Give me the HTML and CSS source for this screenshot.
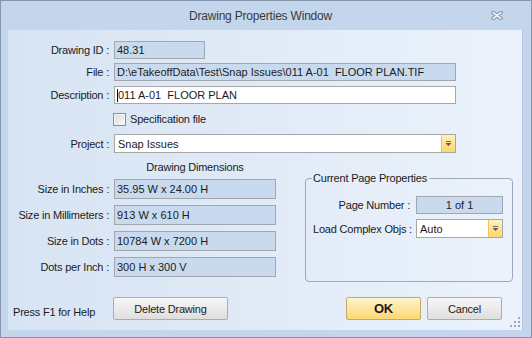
FILE: index.html
```html
<!DOCTYPE html>
<html lang="en">
<head>
    <meta charset="UTF-8">
    <title>Drawing Properties Window</title>
    <link rel="stylesheet" href="styles.css">
</head>
<body>
    <div class="window">
        <div class="titlebar">
            <span class="title">Drawing Properties Window</span>
            <svg class="close" width="12" height="9" viewBox="0 0 12 9">
                <path d="M2 1.5 L10 7.5 M10 1.5 L2 7.5" stroke="#7f90a8" stroke-width="3.6" stroke-linecap="round"/>
                <path d="M2 1.5 L10 7.5 M10 1.5 L2 7.5" stroke="#eef3f9" stroke-width="1.6" stroke-linecap="round"/>
            </svg>
        </div>

        <div class="client">
            <div class="row row-id">
                <label class="lbl">Drawing ID :</label>
                <div class="field readonly w-id">48.31</div>
            </div>
            <div class="row row-file">
                <label class="lbl">File :</label>
                <div class="field readonly w-full">D:\eTakeoffData\Test\Snap Issues\011 A-01&nbsp; FLOOR PLAN.TIF</div>
            </div>
            <div class="row row-desc">
                <label class="lbl">Description :</label>
                <div class="field edit w-full"><span class="caret"></span>011 A-01&nbsp; FLOOR PLAN</div>
            </div>
            <div class="row row-check">
                <span class="checkbox"></span>
                <span>Specification file</span>
            </div>
            <div class="row row-project">
                <label class="lbl">Project :</label>
                <div class="combo w-full">
                    <span class="combo-text">Snap Issues</span>
                    <span class="drop">
                        <svg width="7" height="5" viewBox="0 0 7 5"><rect x="1" y="0" width="5" height="1" fill="#6b6b6b"/><path d="M0.5 2 H6.5 L3.5 5 Z" fill="#5a5a5a"/></svg>
                    </span>
                </div>
            </div>

            <div class="middle">
                <div class="dims">
                    <div class="dims-title">Drawing Dimensions</div>
                    <div class="row dim-row">
                        <label class="lbl">Size in Inches :</label>
                        <div class="field readonly w-dim">35.95 W x 24.00 H</div>
                    </div>
                    <div class="row dim-row">
                        <label class="lbl">Size in Millimeters :</label>
                        <div class="field readonly w-dim">913 W x 610 H</div>
                    </div>
                    <div class="row dim-row">
                        <label class="lbl">Size in Dots :</label>
                        <div class="field readonly w-dim">10784 W x 7200 H</div>
                    </div>
                    <div class="row dim-row">
                        <label class="lbl">Dots per Inch :</label>
                        <div class="field readonly w-dim">300 H x 300 V</div>
                    </div>
                </div>

                <fieldset class="group">
                    <legend>Current Page Properties</legend>
                    <div class="row grp-row">
                        <label class="lbl grp-lbl">Page Number :</label>
                        <div class="field readonly w-grp center">1 of 1</div>
                    </div>
                    <div class="row grp-row">
                        <label class="lbl grp-lbl">Load Complex Objs :</label>
                        <div class="combo w-grp">
                            <span class="combo-text">Auto</span>
                            <span class="drop">
                                <svg width="7" height="5" viewBox="0 0 7 5"><rect x="1" y="0" width="5" height="1" fill="#6b6b6b"/><path d="M0.5 2 H6.5 L3.5 5 Z" fill="#5a5a5a"/></svg>
                            </span>
                        </div>
                    </div>
                </fieldset>
            </div>

            <div class="footer">
                <span class="help">Press F1 for Help</span>
                <button class="btn">Delete Drawing</button>
                <span class="spacer"></span>
                <button class="btn btn-ok">OK</button>
                <button class="btn btn-cancel">Cancel</button>
            </div>

            <svg class="grip" width="10" height="10" viewBox="0 0 10 10">
                <rect x="8" y="0" width="2" height="2" fill="#9aa9bd"/>
                <rect x="4" y="4" width="2" height="2" fill="#9aa9bd"/>
                <rect x="8" y="4" width="2" height="2" fill="#9aa9bd"/>
                <rect x="0" y="8" width="2" height="2" fill="#9aa9bd"/>
                <rect x="4" y="8" width="2" height="2" fill="#9aa9bd"/>
                <rect x="8" y="8" width="2" height="2" fill="#9aa9bd"/>
            </svg>
        </div>
    </div>
</body>
</html>
```

FILE: styles.css
```css
* {
    margin: 0;
    padding: 0;
    box-sizing: border-box;
}

body {
    font-family: "Liberation Sans", Arial, sans-serif;
    font-size: 11px;
    letter-spacing: -0.2px;
    color: #1b1b1b;
    background: #c5d7ed;
}

.window {
    width: 532px;
    height: 338px;
    border: 1px solid #8596ae;
    background: #c4d6ec;
    display: flex;
    flex-direction: column;
    padding: 0 8px 7px 7px;
}

.titlebar {
    height: 29px;
    display: flex;
    align-items: center;
    justify-content: center;
    position: relative;
}

.title {
    font-size: 12px;
    color: #3a3a3a;
    margin-left: -10px;
}

.close {
    position: absolute;
    right: 20px;
    top: 10px;
}

.client {
    flex: 1;
    position: relative;
    background: linear-gradient(to right, #d7e4f3 0%, #e3ecf8 60%, #ebf2fb 100%);
    border-right: 1px solid #b8c9df;
    display: flex;
    flex-direction: column;
    padding: 11px 0 10px 0;
}

.row {
    display: flex;
    align-items: center;
}

.lbl {
    width: 101px;
    text-align: right;
    margin-right: 5px;
    white-space: nowrap;
}

.field {
    height: 18px;
    border: 1px solid #a3a7ad;
    padding: 0 2px;
    display: flex;
    align-items: center;
    white-space: nowrap;
    overflow: hidden;
    letter-spacing: 0;
}

.readonly {
    background: #c9daef;
}

.edit {
    background: #fff;
    border-color: #a7a7a7;
    padding-left: 2px;
}

.caret {
    width: 1px;
    height: 13px;
    background: #000;
}

.center {
    justify-content: center;
}

.w-id {
    width: 91px;
}

.w-full {
    width: 342px;
}

.w-dim {
    width: 162px;
    height: 20px;
}

.w-grp {
    width: 87px;
}

.row-file {
    margin-top: 4px;
}

.row-desc {
    margin-top: 5px;
}

.row-check {
    margin-top: 8px;
    padding-left: 105px;
    height: 14px;
}

.checkbox {
    width: 13px;
    height: 13px;
    border: 1px solid #8e8f8f;
    background: linear-gradient(135deg, #dcdcdc, #f8f8f8);
    box-shadow: inset 0 0 0 1px #f4f4f4;
    margin-right: 4px;
}

.row-project {
    margin-top: 8px;
}

.combo {
    height: 19px;
    background: #fff;
    border: 1px solid #a7a7a7;
    display: flex;
    align-items: stretch;
    letter-spacing: 0;
}

.combo-text {
    flex: 1;
    padding-left: 3px;
    display: flex;
    align-items: center;
}

.drop {
    width: 14px;
    border-left: 1px solid #f1c35a;
    background: linear-gradient(to bottom, #fff2c4, #fde189 55%, #fbd873);
    display: flex;
    align-items: center;
    justify-content: center;
}

.middle {
    display: flex;
    margin-top: 6px;
}

.dims {
    display: flex;
    flex-direction: column;
}

.dims-title {
    height: 16px;
    line-height: 16px;
    padding-left: 106px;
    width: 268px;
    text-align: center;
    margin-bottom: 4px;
}

.dim-row {
    margin-bottom: 6px;
}

.group {
    margin-left: 29px;
    margin-top: 12px;
    width: 208px;
    height: 111px;
    border: 1px solid #9eaab9;
    border-radius: 4px;
    padding: 11px 0 0 7px;
}

.group legend {
    margin-left: -1px;
    padding: 0 2px 0 1px;
    line-height: 14px;
}

.grp-lbl {
    width: 97px;
    margin-right: 6px;
}

.grp-row + .grp-row {
    margin-top: 5px;
}

.footer {
    margin-top: auto;
    display: flex;
    align-items: center;
    padding-left: 5px;
    padding-right: 20px;
}

.help {
    width: 100px;
    padding-top: 6px;
}

.spacer {
    flex: 1;
}

.btn {
    height: 23px;
    width: 115px;
    font-family: inherit;
    font-size: 11px;
    letter-spacing: inherit;
    color: #1b1b1b;
    border: 1px solid #a9aeb4;
    border-radius: 2px;
    background: linear-gradient(to bottom, #f6f6f6 0%, #ebebeb 50%, #dedede 100%);
}

.btn-ok {
    width: 75px;
    font-weight: bold;
    font-size: 13px;
    border-color: #c6a868;
    background: linear-gradient(to bottom, #fff4cf 0%, #fee6a0 50%, #fcd874 100%);
}

.btn-cancel {
    width: 75px;
    margin-left: 6px;
}

.grip {
    position: absolute;
    right: 2px;
    bottom: 3px;
}
```
